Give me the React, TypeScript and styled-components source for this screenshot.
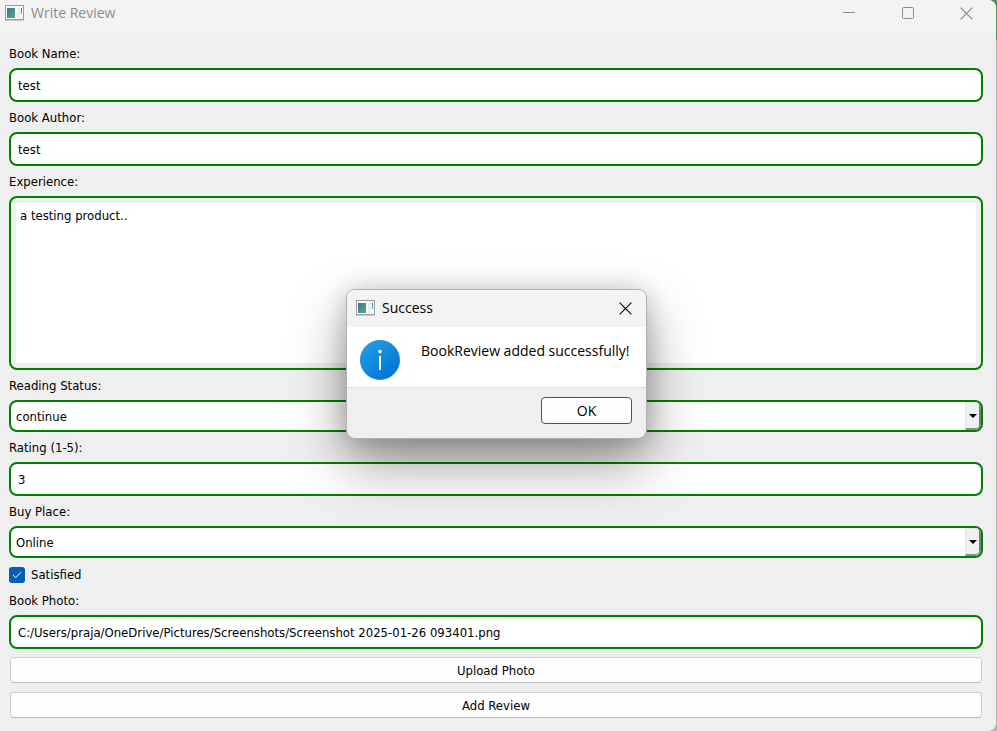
import React, { useState } from "react";
import styled, { createGlobalStyle, css } from "styled-components";

const formFont = `"DejaVu Sans Condensed", "DejaVu Sans", sans-serif`;
const uiFont = `"Open Sans", "Noto Sans", sans-serif`;

const GlobalStyle = createGlobalStyle`
  *, *::before, *::after { box-sizing: border-box; }
  body {
    margin: 0;
    background: linear-gradient(#4d9556 40px, #b4b4b4 40px);
  }
`;

const Window = styled.main`
  position: relative;
  display: flex;
  flex-direction: column;
  min-height: 100vh;
  margin-right: 1px;
  background: #efefef;
  border-radius: 0 8px 8px 0;
  overflow: hidden;
`;

const TitleBar = styled.header`
  display: flex;
  align-items: center;
  height: 32px;
  padding: 0 12px 6px 5px;
  background: #f3f3f3;
`;

const Title = styled.h1<{ $muted?: boolean }>`
  flex: 1;
  margin: 0 0 0 6px;
  font: 400 14px/20px ${uiFont};
  color: ${(p) => (p.$muted ? "#8c8c8c" : "#000")};
`;

const CaptionButtons = styled.div`
  display: flex;
  gap: 24px;
`;

const CaptionButton = styled.button<{ $muted?: boolean }>`
  display: grid;
  place-items: center;
  width: 35px;
  height: 26px;
  padding: 0;
  border: 0;
  background: none;
  color: ${(p) => (p.$muted ? "#8c8c8c" : "#111")};
`;

const Form = styled.form`
  display: flex;
  flex-direction: column;
  gap: 7px;
  padding: 13px 13px 12px 9px;
  font: 13px/16px ${formFont};
  color: #000;
`;

const Field = styled.div`
  display: flex;
  flex-direction: column;
  gap: 7px;
`;

const FieldLabel = styled.label`
  height: 16px;
  line-height: 18px;
`;

const greenFrame = css`
  width: 100%;
  border: 2px solid #008000;
  border-radius: 8px;
  outline: none;
  font: inherit;
  color: inherit;
`;

const TextInput = styled.input`
  ${greenFrame}
  height: 34px;
  padding: 0 7px;
  background: #fff;
`;

const TextArea = styled.textarea`
  ${greenFrame}
  display: block;
  height: 174px;
  padding: 10px 9px;
  resize: none;
  background: #fff;
  box-shadow: inset 0 0 0 5px #efefef;
`;

const SelectFrame = styled.div`
  ${greenFrame}
  display: grid;
  height: 32px;
  overflow: hidden;
  background: #fff;
`;

const SelectInput = styled.select`
  grid-area: 1 / 1;
  width: 100%;
  height: 100%;
  padding: 2px 20px 0 5px;
  border: 0;
  outline: none;
  appearance: none;
  background: transparent;
  font: inherit;
  color: inherit;
`;

const DropCap = styled.span`
  grid-area: 1 / 1;
  justify-self: end;
  display: grid;
  place-items: center;
  width: 16px;
  height: 28px;
  border: 1px solid #e3e3e3;
  border-right: 2px solid #7b7b7b;
  border-bottom: 2px solid #8a8a8a;
  border-radius: 0 4px 5px 0;
  background: #f0f0f0;
  pointer-events: none;
`;

const CheckRow = styled.label`
  display: flex;
  align-items: center;
  gap: 6px;
  height: 20px;
  line-height: 18px;
`;

const CheckBox = styled.input`
  appearance: none;
  width: 16px;
  height: 16px;
  margin: 0;
  border-radius: 3px;
  background: #005fb8;
`;

const CheckWrap = styled.span`
  display: grid;
  place-items: center;
  > * { grid-area: 1 / 1; }
  > svg { pointer-events: none; }
  > input:not(:checked) { background: #fff; border: 1px solid #868686; }
`;

const PushButton = styled.button`
  height: 26px;
  margin: 1px;
  padding: 2px 0 0;
  border: 1px solid #d0d0d0;
  border-bottom-color: #b9b9b9;
  border-radius: 4px;
  background: #fdfdfd;
  font: inherit;
  color: inherit;
`;

const Overlay = styled.div`
  position: absolute;
  inset: 0 3px 3px 0;
  display: grid;
  place-items: center;
`;

const Dialog = styled.section`
  min-width: 301px;
  border: 1px solid #b0b0b0;
  border-radius: 9px;
  overflow: hidden;
  background: #efefef;
  box-shadow: 0 26px 56px rgba(0, 0, 0, 0.38), 0 2px 24px rgba(0, 0, 0, 0.2);
`;

const DialogTitle = styled.header`
  display: flex;
  align-items: center;
  height: 37px;
  padding: 0 3px 1px 9px;
  background: #f3f3f3;
`;

const DialogBody = styled.div`
  display: flex;
  gap: 21px;
  height: 61px;
  padding: 13px 12px 0 13px;
  background: #fff;
  border-bottom: 1px solid #dfdfdf;
`;

const Message = styled.p`
  margin: 0;
  font: 14px/22px ${uiFont};
  color: #000;
  white-space: nowrap;
`;

const DialogFooter = styled.footer`
  display: flex;
  justify-content: flex-end;
  padding: 9px 14px 14px;
`;

const OkButton = styled.button`
  width: 91px;
  height: 27px;
  padding: 1px 0 0;
  border: 1px solid #0067c0;
  border-radius: 4px;
  background: #fdfdfd;
  font: 14px/20px ${uiFont};
  color: #000;
`;

const AppIcon = () => (
  <svg width="20" height="16" viewBox="0 0 20 16" aria-hidden="true">
    <defs>
      <linearGradient id="pane" x1="0" y1="0" x2="1" y2="1">
        <stop offset="0" stopColor="#3f74a0" />
        <stop offset="1" stopColor="#5aa87a" />
      </linearGradient>
    </defs>
    <rect x="0.5" y="0.5" width="18" height="14" fill="#f6f8f9" stroke="#989da2" />
    <path d="M0 15.5h19" stroke="#c9cccf" />
    <rect x="2" y="3" width="8" height="10" fill="url(#pane)" />
    <path d="M12 3h3v10h-3z" fill="#e9edef" />
    <path d="M16.5 3v3" stroke="#3f74b0" />
    <path d="M16.5 6v3" stroke="#5aa87a" />
  </svg>
);

const CloseIcon = () => (
  <svg width="13" height="13" viewBox="0 0 13 13" fill="none" stroke="currentColor" strokeWidth="1.2" aria-hidden="true">
    <path d="M.6.6l11.8 11.8M12.4.6L.6 12.4" />
  </svg>
);

const InfoIcon = () => (
  <svg width="40" height="40" viewBox="0 0 40 40" aria-hidden="true">
    <defs>
      <linearGradient id="info" x1="0.15" y1="0.1" x2="0.8" y2="0.95">
        <stop offset="0" stopColor="#209ce2" />
        <stop offset="1" stopColor="#0073d6" />
      </linearGradient>
    </defs>
    <circle cx="20" cy="20" r="19.6" fill="url(#info)" stroke="#0f78c6" strokeWidth="0.7" />
    <circle cx="20" cy="11.6" r="1.8" fill="#fff" />
    <path d="M20 16v14" stroke="#fff" strokeWidth="2" />
  </svg>
);

function LabeledInput({ id, label, value }: { id: string; label: string; value: string }) {
  return (
    <Field>
      <FieldLabel htmlFor={id}>{label}</FieldLabel>
      <TextInput id={id} defaultValue={value} />
    </Field>
  );
}

function LabeledSelect({ id, label, options }: { id: string; label: string; options: string[] }) {
  return (
    <Field>
      <FieldLabel htmlFor={id}>{label}</FieldLabel>
      <SelectFrame>
        <SelectInput id={id}>
          {options.map((o) => (
            <option key={o}>{o}</option>
          ))}
        </SelectInput>
        <DropCap>
          <svg width="8" height="4" viewBox="0 0 8 4" aria-hidden="true">
            <path d="M0 0h8L4 4z" />
          </svg>
        </DropCap>
      </SelectFrame>
    </Field>
  );
}

export default function App() {
  const [open, setOpen] = useState(true);
  const [satisfied, setSatisfied] = useState(true);

  return (
    <>
      <GlobalStyle />
      <Window>
        <TitleBar>
          <AppIcon />
          <Title $muted>Write Review</Title>
          <CaptionButtons>
            <CaptionButton $muted aria-label="Minimize">
              <svg width="12" height="12" viewBox="0 0 12 12" stroke="currentColor" aria-hidden="true">
                <path d="M0 5.5h12" />
              </svg>
            </CaptionButton>
            <CaptionButton $muted aria-label="Maximize">
              <svg width="12" height="12" viewBox="0 0 12 12" fill="none" stroke="currentColor" aria-hidden="true">
                <rect x="0.5" y="0.5" width="11" height="11" rx="1" />
              </svg>
            </CaptionButton>
            <CaptionButton $muted aria-label="Close">
              <CloseIcon />
            </CaptionButton>
          </CaptionButtons>
        </TitleBar>

        <Form onSubmit={(e) => e.preventDefault()}>
          <LabeledInput id="name" label="Book Name:" value="test" />
          <LabeledInput id="author" label="Book Author:" value="test" />
          <Field>
            <FieldLabel htmlFor="experience">Experience:</FieldLabel>
            <TextArea id="experience" defaultValue="a testing product.." />
          </Field>
          <LabeledSelect id="status" label="Reading Status:" options={["continue", "completed"]} />
          <LabeledInput id="rating" label="Rating (1-5):" value="3" />
          <LabeledSelect id="place" label="Buy Place:" options={["Online", "Offline"]} />
          <CheckRow>
            <CheckWrap>
              <CheckBox type="checkbox" checked={satisfied} onChange={(e) => setSatisfied(e.target.checked)} />
              <svg width="10" height="8" viewBox="0 0 10 8" fill="none" stroke="#fff" aria-hidden="true">
                <path d="M1 4l2.7 2.7L9 1.2" />
              </svg>
            </CheckWrap>
            Satisfied
          </CheckRow>
          <LabeledInput
            id="photo"
            label="Book Photo:"
            value="C:/Users/praja/OneDrive/Pictures/Screenshots/Screenshot 2025-01-26 093401.png"
          />
          <PushButton type="button">Upload Photo</PushButton>
          <PushButton type="submit">Add Review</PushButton>
        </Form>

        {open && (
          <Overlay>
            <Dialog role="dialog" aria-labelledby="dialog-title">
              <DialogTitle>
                <AppIcon />
                <Title as="h2" id="dialog-title">
                  Success
                </Title>
                <CaptionButton aria-label="Close dialog" onClick={() => setOpen(false)}>
                  <CloseIcon />
                </CaptionButton>
              </DialogTitle>
              <DialogBody>
                <InfoIcon />
                <Message>BookReview added successfully!</Message>
              </DialogBody>
              <DialogFooter>
                <OkButton onClick={() => setOpen(false)}>OK</OkButton>
              </DialogFooter>
            </Dialog>
          </Overlay>
        )}
      </Window>
    </>
  );
}
